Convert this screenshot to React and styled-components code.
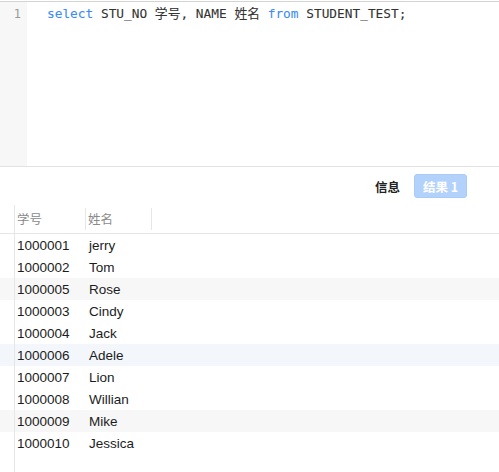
import styled, { createGlobalStyle } from "styled-components";

const GlobalStyle = createGlobalStyle`
  html, body {
    margin: 0;
    padding: 0;
    background: #ffffff;
  }
  body {
    font-family: "Liberation Sans", "Noto Sans CJK SC", sans-serif;
  }
`;

const rows = [
  { no: "1000001", name: "jerry" },
  { no: "1000002", name: "Tom" },
  { no: "1000005", name: "Rose", tone: "gray" },
  { no: "1000003", name: "Cindy" },
  { no: "1000004", name: "Jack" },
  { no: "1000006", name: "Adele", tone: "blue" },
  { no: "1000007", name: "Lion" },
  { no: "1000008", name: "Willian" },
  { no: "1000009", name: "Mike", tone: "gray" },
  { no: "1000010", name: "Jessica" },
];

const tones = {
  gray: "#f7f7f7",
  blue: "#f3f7fc",
};

export default function App() {
  return (
    <Page>
      <GlobalStyle />
      <Editor>
        <Gutter>1</Gutter>
        <Code>
          <Keyword>select</Keyword> STU_NO 学号, NAME 姓名 <Keyword>from</Keyword>{" "}
          STUDENT_TEST;
        </Code>
      </Editor>

      <Toolbar>
        <Tab>信息</Tab>
        <ResultButton>结果 1</ResultButton>
      </Toolbar>

      <Table>
        <HeaderRow>
          <Spacer />
          <HeaderCell>学号</HeaderCell>
          <HeaderCell>姓名</HeaderCell>
          <div />
        </HeaderRow>
        {rows.map((row) => (
          <Row key={row.no} $bg={tones[row.tone]}>
            <Spacer />
            <Cell>{row.no}</Cell>
            <Cell $indent>{row.name}</Cell>
            <div />
          </Row>
        ))}
        <Filler />
      </Table>
    </Page>
  );
}

const Page = styled.div`
  width: 499px;
  height: 472px;
  display: flex;
  flex-direction: column;
  overflow: hidden;
`;

const Editor = styled.div`
  display: flex;
  height: 164px;
  margin-top: 1px;
  border-top: 1px solid #d4d4d4;
  border-bottom: 1px solid #e2e2e2;
`;

const Gutter = styled.div`
  width: 27px;
  box-sizing: border-box;
  padding: 3px 6px 0 0;
  background: #f7f7f7;
  text-align: right;
  font-family: "DejaVu Sans Mono", "Liberation Mono", monospace;
  font-size: 12px;
  line-height: 18px;
  color: #9a9a9a;
`;

const Code = styled.div`
  padding: 3px 0 0 20px;
  font-family: "DejaVu Sans Mono", "Noto Sans CJK SC", monospace;
  font-size: 12.8px;
  line-height: 18px;
  color: #333333;
  white-space: pre;
  -webkit-text-stroke: 0.08px #333333;
`;

const Keyword = styled.span`
  color: #3a8cf2;
  -webkit-text-stroke: 0.08px #3a8cf2;
`;

const Toolbar = styled.div`
  height: 38px;
  display: flex;
  align-items: center;
  justify-content: flex-end;
  gap: 14px;
  padding-right: 32px;
`;

const Tab = styled.span`
  font-family: "Noto Sans CJK SC", sans-serif;
  font-size: 12.5px;
  font-weight: 600;
  color: #222;
`;

const ResultButton = styled.button`
  width: 53px;
  height: 24px;
  padding: 0;
  border: 1px solid #a9cbf9;
  border-radius: 3px;
  background: #b3d2fb;
  color: #ffffff;
  font-family: "Noto Sans CJK SC", sans-serif;
  font-size: 12.5px;
  font-weight: 700;
`;

const Table = styled.div`
  display: flex;
  flex-direction: column;
  flex: 1;
`;

const HeaderRow = styled.div`
  display: grid;
  grid-template-columns: 15px 71px 66px 1fr;
  align-items: center;
  height: 28px;
  border-bottom: 1px solid #e6e6e6;
`;

const Spacer = styled.div`
  align-self: stretch;
  border-right: 1px solid #e6e6e6;
`;

const HeaderCell = styled.div`
  height: 22px;
  line-height: 22px;
  padding-left: 2px;
  border-right: 1px solid #e6e6e6;
  font-family: "Noto Sans CJK SC", sans-serif;
  font-size: 12.5px;
  color: #8a8a8a;
`;

const Row = styled.div`
  display: grid;
  grid-template-columns: 15px 71px 66px 1fr;
  height: 22px;
  align-items: center;
  background: ${(p) => p.$bg || "transparent"};
`;

const Cell = styled.div`
  padding-left: ${(p) => (p.$indent ? "3px" : "2px")};
  font-size: 13.5px;
  color: #1c1c1c;
  white-space: nowrap;
`;

const Filler = styled.div`
  flex: 1;
  width: 14px;
  border-right: 1px solid #e6e6e6;
`;
